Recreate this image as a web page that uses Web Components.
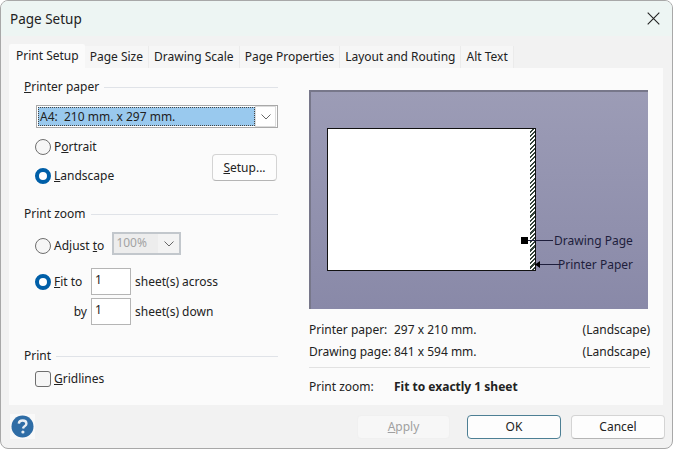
<!DOCTYPE html>
<html>
<head>
<meta charset="utf-8">
<title>Page Setup</title>
<style>
  html, body { margin: 0; height: 100%; background: #fff; }
  body { font: 12px "Noto Sans", "Liberation Sans", sans-serif; color: #222; }
</style>
</head>
<body>
<page-setup-dialog></page-setup-dialog>
<script>
const define = (name, css, html) => {
  customElements.define(name, class extends HTMLElement {
    connectedCallback() {
      if (this.shadowRoot) return;
      this.attachShadow({ mode: 'open' });
      const template = document.createElement('template');
      template.innerHTML = `<style>${css}</style>${html}`;
      this.shadowRoot.appendChild(template.content.cloneNode(true));
    }
  });
};

define('group-head', `
  :host { display: flex; align-items: center; gap: 5px; height: 16px; }
  i { flex: 1; height: 1px; background: #e0e3e8; }
`, `<slot></slot><i></i>`);

define('radio-box', `
  :host { display: inline-flex; align-items: center; gap: 3px; }
  b { box-sizing: border-box; width: 16px; height: 16px; border-radius: 50%; border: 1px solid #6e6e6e; background: #f6f6f6; }
  :host([on]) b { border: 4.5px solid #005fa8; background: #fff; }
`, `<b></b><span><slot></slot></span>`);

define('check-box', `
  :host { display: inline-flex; align-items: center; gap: 3px; }
  b { box-sizing: border-box; width: 16px; height: 16px; border-radius: 3px; border: 1px solid #6e6e6e; background: #f6f6f6; }
`, `<b></b><span><slot></slot></span>`);

define('push-button', `
  :host { display: inline-flex; align-items: center; justify-content: center; box-sizing: border-box;
    background: #fdfdfd; border: 1px solid #d4d4d4; border-bottom-color: #b5b5b5; border-radius: 4px; }
  :host([primary]) { border: 1.5px solid #4d7f94; }
  :host([disabled]) { background: #f7f7f7; border-color: #f0f0f0; color: #a0a0a0; }
`, `<slot></slot>`);

define('combo-box', `
  :host { display: flex; box-sizing: border-box; height: 23px; border: 1px solid #a9a9a9; background: #fff; padding: 1px; }
  span { flex: 1; background: #99c9ee; outline: 1px dotted #444; outline-offset: -1px; padding-left: 2px; line-height: 19px; }
  div { width: 21px; display: flex; align-items: center; justify-content: center; border: 1px solid #dcdcdc; margin: -1px 0 -1px 0; box-sizing: border-box; height: 21px; }
  :host([disabled]) { border: 2px solid #c2c7cc; background: #ededed; color: #a3a3a3; padding: 0; }
  :host([disabled]) span { background: none; outline: none; line-height: 18px; }
  :host([disabled]) div { border: 0; background: #f3f3f3; margin: 0; height: 19px; }
`, `<span><slot></slot></span><div><svg width="10" height="6" viewBox="0 0 10 6"><path d="M.5.5 5 5 9.5.5" fill="none" stroke="#666"/></svg></div>`);

define('num-input', `
  :host { display: block; box-sizing: border-box; width: 40px; height: 27px; border: 1px solid #b5b5b5; background: #fff; padding: 0 3px; line-height: 22px; }
`, `<slot></slot>`);

define('sheet-preview', `
  :host { display: block; position: relative; box-sizing: border-box; height: 219px; margin-right: 2px;
    background: linear-gradient(#9c9cb6, #8989a8); border-top: 2px solid #77778a; border-left: 2px solid #77778a; color: #1e1e3c; }
  .page { position: absolute; left: 16px; top: 36px; width: 204px; height: 143px; box-sizing: border-box; background: #fff; border: 1px solid #111; }
  .paper { position: absolute; left: 219px; top: 36px; width: 6px; height: 143px; box-sizing: border-box; border: 1px solid #111; border-left: 0;
    background: repeating-linear-gradient(135deg, #fff 0 1.5px, #33443a 1.5px 3px); }
  svg { position: absolute; left: 205px; top: 139px; }
  span { position: absolute; white-space: nowrap; }
  .dp { left: 243px; top: 141px; }
  .pp { left: 247px; top: 165px; }
`, `<div class="page"></div><div class="paper"></div>
  <svg width="60" height="40" viewBox="0 0 60 40">
    <rect x="5" y="6" width="7" height="7" fill="#000"/>
    <path d="M12 9.5H37M24 33.5H46" stroke="#1e1e3c" fill="none"/>
    <path d="M19 33.5 24 30V37Z" fill="#000"/>
  </svg>
  <span class="dp">Drawing Page</span><span class="pp">Printer Paper</span>`);

define('tab-strip', `
  :host { display: flex; align-items: flex-end; height: 24px; padding-left: 9px; }
  span { height: 22px; line-height: 22px; padding: 0 5px; background: #f6f6f6; border-right: 1px solid #ebebeb; white-space: nowrap; }
  .on { height: 24px; line-height: 23px; background: #fbfbfb; padding: 0 6px 0 7px; border-right: 0; margin-left: -1px; border-radius: 2px 2px 0 0; }
`, `<span class="on">Print Setup</span><span>Page Size</span><span>Drawing Scale</span><span>Page Properties</span><span>Layout and Routing</span><span>Alt Text</span>`);

define('print-setup-left', `
  :host { display: block; width: 254px; line-height: 16px; }
  u { text-underline-offset: 1px; }
  .combo { margin: 10px 0 0 12px; }
  .paper-row { display: flex; justify-content: space-between; margin: 9px 1px 0 11px; }
  .radios { display: flex; flex-direction: column; gap: 13px; padding-top: 2px; }
  .adjust { display: flex; align-items: center; gap: 8px; margin: 10px 0 0 11px; }
  .adjust radio-box { margin-top: 4px; }
  .adjust combo-box { width: 69px; }
  .rows { display: grid; grid-template-columns: 56px 40px auto; row-gap: 3px; align-items: center; margin: 13px 0 0 11px; }
  .rows > :nth-child(3n) { padding-left: 4px; }
  .by { text-align: right; padding-right: 4px; }
  .g2 { margin-top: 22px; }
  .g3 { margin-top: 23px; }
`, `
  <group-head><span><u>P</u>rinter paper</span></group-head>
  <div class="combo"><combo-box>A4:&nbsp; 210 mm. x 297 mm.</combo-box></div>
  <div class="paper-row">
    <div class="radios">
      <radio-box>P<u>o</u>rtrait</radio-box>
      <radio-box on><u>L</u>andscape</radio-box>
    </div>
    <push-button style="width:65px;height:27px;align-self:flex-end;margin-bottom:3px"><span><u>S</u>etup...</span></push-button>
  </div>
  <group-head class="g2"><span>Print zoom</span></group-head>
  <div class="adjust"><radio-box>Adjust <u>t</u>o</radio-box><combo-box disabled>100%</combo-box></div>
  <div class="rows">
    <radio-box on><u>F</u>it to</radio-box><num-input>1</num-input><span>sheet(s) across</span>
    <span class="by">by</span><num-input>1</num-input><span>sheet(s) down</span>
  </div>
  <group-head class="g3"><span>Print</span></group-head>
  <div style="margin:7px 0 0 11px"><check-box><u>G</u>ridlines</check-box></div>
`);

define('print-setup-right', `
  :host { display: block; width: 341px; line-height: 16px; margin-top: 11px; }
  .info { display: grid; grid-template-columns: 85px 1fr auto; row-gap: 6px; margin-top: 13px; padding-bottom: 7px; border-bottom: 1px solid #e2e2e2; }
  .zoom { display: grid; grid-template-columns: 85px 1fr; margin-top: 11px; }
  b { font-weight: 700; }
`, `
  <sheet-preview></sheet-preview>
  <div class="info">
    <span>Printer paper:</span><span>297 x 210 mm.</span><span>(Landscape)</span>
    <span>Drawing page:</span><span>841 x 594 mm.</span><span>(Landscape)</span>
  </div>
  <div class="zoom"><span>Print zoom:</span><b>Fit to exactly 1 sheet</b></div>
`);

define('page-setup-dialog', `
  :host { display: flex; flex-direction: column; box-sizing: border-box; width: 673px; height: 449px; background: #f2f2f2;
    border: 1px solid #a8a8a8; border-radius: 8px; overflow: hidden; }
  .title { display: flex; align-items: center; justify-content: space-between; height: 35px; flex: none;
    padding: 0 12px 0 9px; box-sizing: border-box; background: #edf5f3; font-size: 13.5px; }
  .tabs { margin-top: 8px; }
  .panel { display: flex; justify-content: space-between; box-sizing: border-box; height: 337px; margin: 0 9px 0 8px; background: #fbfbfb;
    padding: 11px 13px 0 15px; }
  .foot { flex: 1; display: flex; align-items: center; padding: 0 7px 0 9px; }
  .help { flex: none; width: 25px; height: 25px; background: #f9f9f9; display: flex; align-items: center; justify-content: center; margin-right: 322px; }
  .foot push-button { flex: none; height: 24px; width: 94px; }
  .foot .apply { width: 93px; margin-right: 17px; }
  .ok { margin-right: 10px; }
  u { text-underline-offset: 1px; }
`, `
  <div class="title"><span>Page Setup</span>
    <svg width="13" height="13" viewBox="0 0 13 13"><path d="M.7.7 12.3 12.3M12.3.7.7 12.3" stroke="#222" stroke-width="1.1" fill="none"/></svg>
  </div>
  <tab-strip class="tabs"></tab-strip>
  <div class="panel"><print-setup-left></print-setup-left><print-setup-right></print-setup-right></div>
  <div class="foot">
    <div class="help"><svg width="23" height="23" viewBox="0 0 23 23"><circle cx="11.5" cy="11.5" r="11" fill="#2f6da6"/>
      <path d="M7.8 8.6C8 6.6 9.5 5.5 11.6 5.5 13.8 5.5 15.4 6.8 15.4 8.7 15.4 11 12.4 11.2 12 13.5" fill="none" stroke="#e8eef4" stroke-width="2.4"/><circle cx="11.9" cy="17" r="1.6" fill="#e8eef4"/></svg></div>
    <push-button class="apply" disabled><span><u>A</u>pply</span></push-button>
    <push-button class="ok" primary>OK</push-button>
    <push-button>Cancel</push-button>
  </div>
`);
</script>
</body>
</html>
